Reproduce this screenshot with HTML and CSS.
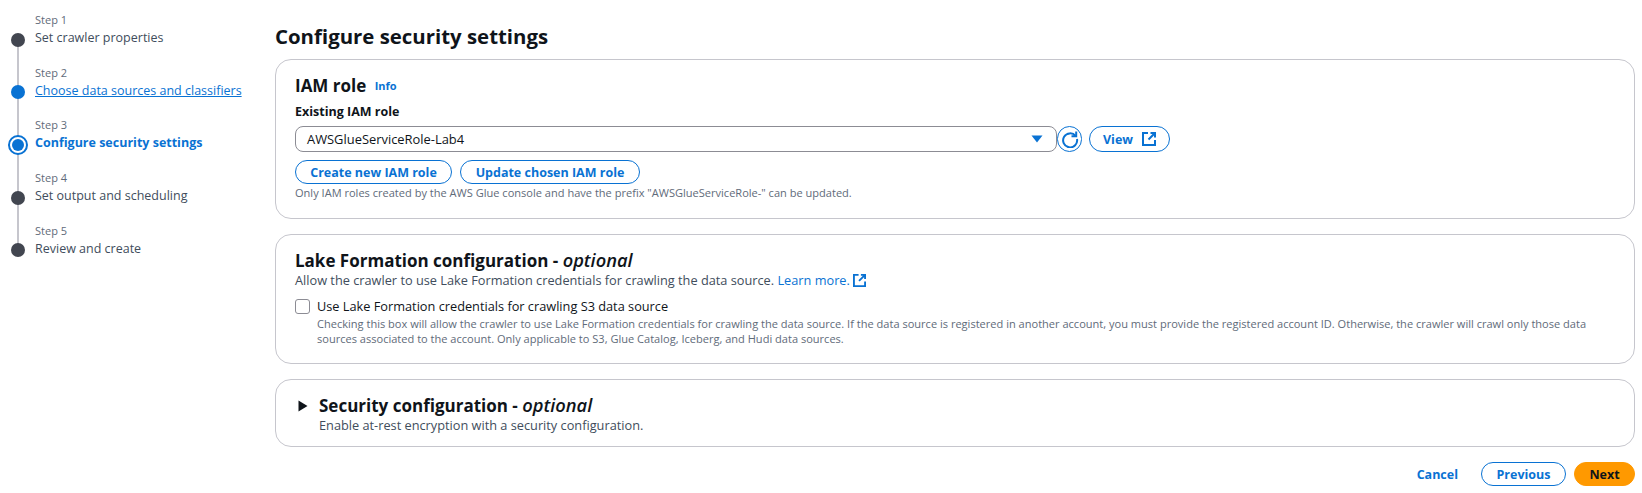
FILE: index.html
```html
<!DOCTYPE html>
<html lang="en">
<head>
    <meta charset="UTF-8">
    <title>Configure security settings</title>
    <link rel="stylesheet" href="styles.css">
</head>
<body>
    <nav class="wizard">
        <div class="step">
            <div class="step-num">Step 1</div>
            <div class="step-row"><span class="dot"></span><span class="step-name">Set crawler properties</span></div>
        </div>
        <div class="step">
            <div class="step-num">Step 2</div>
            <div class="step-row"><span class="dot dot-done"></span><a class="step-name step-link" href="#">Choose data sources and classifiers</a></div>
        </div>
        <div class="step">
            <div class="step-num">Step 3</div>
            <div class="step-row"><span class="dot dot-active"></span><span class="step-name step-current">Configure security settings</span></div>
        </div>
        <div class="step">
            <div class="step-num">Step 4</div>
            <div class="step-row"><span class="dot"></span><span class="step-name">Set output and scheduling</span></div>
        </div>
        <div class="step step-last">
            <div class="step-num">Step 5</div>
            <div class="step-row"><span class="dot"></span><span class="step-name">Review and create</span></div>
        </div>
    </nav>

    <main class="content">
        <h1>Configure security settings</h1>

        <section class="panel panel-iam">
            <h2>IAM role <a class="info" href="#">Info</a></h2>
            <div class="field-label">Existing IAM role</div>
            <div class="select-row">
                <div class="select">
                    <span>AWSGlueServiceRole-Lab4</span>
                    <svg class="caret" width="12" height="8" viewBox="0 0 12 8"><path d="M0.5 0.5h11L6 7.5z" fill="#0972d3"/></svg>
                </div>
                <button class="btn btn-icon" aria-label="Refresh">
                    <svg width="18" height="18" viewBox="0 0 18 18" fill="none" stroke="#0972d3" stroke-width="2"><path d="M14.6 6A7 7 0 1 0 16 9"/><path d="M15.2 1.5V6.2H10.5"/></svg>
                </button>
                <button class="btn btn-view">View
                    <svg width="14" height="14" viewBox="0 0 14 14" fill="none" stroke="#0972d3" stroke-width="2"><path d="M6 1H1V13H13V8"/><path d="M8.5 1H13V5.5M13 1L6.5 7.5"/></svg>
                </button>
            </div>
            <div class="btn-row">
                <button class="btn btn-create">Create new IAM role</button>
                <button class="btn btn-update">Update chosen IAM role</button>
            </div>
            <p class="hint">Only IAM roles created by the AWS Glue console and have the prefix "AWSGlueServiceRole-" can be updated.</p>
        </section>

        <section class="panel panel-lake">
            <h2>Lake Formation configuration - <em>optional</em></h2>
            <p class="desc">Allow the crawler to use Lake Formation credentials for crawling the data source. <a href="#">Learn more.</a>
                <svg class="ext" width="13" height="13" viewBox="0 0 14 14" fill="none" stroke="#0972d3" stroke-width="2"><path d="M6 1H1V13H13V8"/><path d="M8.5 1H13V5.5M13 1L6.5 7.5"/></svg>
            </p>
            <div class="check-row">
                <span class="checkbox"></span>
                <div>
                    <div class="check-label">Use Lake Formation credentials for crawling S3 data source</div>
                    <p class="check-hint">Checking this box will allow the crawler to use Lake Formation credentials for crawling the data source. If the data source is registered in another account, you must provide the registered account ID. Otherwise, the crawler will crawl only those data sources associated to the account. Only applicable to S3, Glue Catalog, Iceberg, and Hudi data sources.</p>
                </div>
            </div>
        </section>

        <section class="panel panel-security">
            <svg class="arrow" width="10" height="12" viewBox="0 0 10 12"><path d="M0.5 0.5L9.5 6L0.5 11.5z" fill="#0f141a"/></svg>
            <div>
                <h2>Security configuration - <em>optional</em></h2>
                <p class="desc">Enable at-rest encryption with a security configuration.</p>
            </div>
        </section>

        <footer class="actions">
            <a class="cancel" href="#">Cancel</a>
            <button class="btn btn-prev">Previous</button>
            <button class="btn btn-next">Next</button>
        </footer>
    </main>
</body>
</html>
```

FILE: styles.css
```css
* {
    box-sizing: border-box;
}
body {
    margin: 0;
    display: flex;
    font-family: "Open Sans", Arial, sans-serif;
    font-size: 12.5px;
    color: #414d5c;
    background-color: white;
}
.wizard {
    width: 275px;
    flex-shrink: 0;
    padding-top: 13px;
}
.step {
    position: relative;
    height: 52.7px;
}
.step::before {
    content: "";
    position: absolute;
    left: 17px;
    top: 32px;
    height: 48px;
    width: 2px;
    background-color: #c6c6cd;
}
.step-last::before {
    display: none;
}
.step-num {
    margin-left: 35px;
    font-size: 11px;
    line-height: 14px;
    color: #5f6b7a;
}
.step-row {
    display: flex;
    align-items: center;
    height: 19px;
    margin-top: 1px;
}
.dot {
    width: 14px;
    height: 14px;
    margin: 4px 6px 0 11px;
    border-radius: 50%;
    background-color: #424650;
    flex-shrink: 0;
    position: relative;
    z-index: 1;
}
.dot-done {
    background-color: #0972d3;
}
.dot-active {
    width: 20px;
    height: 20px;
    margin: 4px 3px 0 8px;
    background-color: white;
    border: 2px solid #0972d3;
}
.dot-active::after {
    content: "";
    position: absolute;
    left: 2px;
    top: 2px;
    width: 12px;
    height: 12px;
    border-radius: 50%;
    background-color: #0972d3;
}
.step-name {
    white-space: nowrap;
    margin-left: 4px;
}
.step-link {
    color: #0972d3;
}
.step-current {
    color: #0972d3;
    font-weight: 700;
}
.content {
    flex: 1;
    padding-right: 7px;
}
h1 {
    margin: 0;
    padding-top: 22px;
    font-size: 20.4px;
    line-height: 28px;
    font-weight: 700;
    color: #0f141a;
}
h2 {
    margin: 0;
    font-size: 17px;
    line-height: 22px;
    font-weight: 700;
    color: #0f141a;
}
h2 em {
    font-weight: 600;
    font-size: 18.3px;
}
.panel {
    margin-top: 9px;
    border: 1px solid #c6c6cd;
    border-radius: 16px;
    padding: 0 19px;
}
.panel-iam {
    height: 160px;
    padding-top: 15px;
}
.panel-lake {
    height: 130px;
    margin-top: 15px;
    padding-top: 14px;
}
.panel-security {
    height: 68px;
    margin-top: 15px;
    padding-top: 14px;
    display: flex;
    gap: 11px;
}
.arrow {
    margin: 6px 0 0 3px;
}
.info {
    margin-left: 4px;
    font-size: 11px;
    vertical-align: 2px;
    color: #0972d3;
    text-decoration: none;
}
.field-label {
    margin-top: 6px;
    font-size: 12.5px;
    line-height: 18px;
    font-weight: 700;
    color: #0f141a;
}
.select-row {
    display: flex;
    align-items: center;
    margin-top: 5px;
}
.select {
    width: 762px;
    height: 26px;
    display: flex;
    align-items: center;
    justify-content: space-between;
    padding: 0 13px 0 11px;
    border: 1px solid #8c8c94;
    border-radius: 8px;
    color: #0f141a;
    font-size: 12.9px;
}
.btn {
    font-family: inherit;
    font-size: 12.5px;
    font-weight: 700;
    color: #0972d3;
    background-color: white;
    border: 1px solid #0972d3;
    border-radius: 20px;
    padding: 0;
    height: 24px;
}
.btn-icon {
    width: 25px;
    height: 26px;
    display: flex;
    align-items: center;
    justify-content: center;
}
.btn-view {
    width: 81px;
    height: 26px;
    margin-left: 7px;
    display: flex;
    align-items: center;
    justify-content: center;
    gap: 9px;
}
.btn-row {
    display: flex;
    gap: 8px;
    margin-top: 8px;
}
.btn-create {
    width: 157px;
}
.btn-update {
    width: 180px;
}
.hint {
    margin: 0;
    font-size: 11.05px;
    line-height: 16px;
    color: #5f6b7a;
    padding-top: 1px;
}
.desc {
    margin: 0;
    font-size: 12.75px;
    line-height: 17px;
    color: #414d5c;
}
.desc a {
    color: #0972d3;
    text-decoration: none;
}
.ext {
    vertical-align: -2px;
}
.check-row {
    display: flex;
    gap: 7px;
    margin-top: 9px;
}
.checkbox {
    width: 15px;
    height: 15px;
    margin-top: 1px;
    border: 1.5px solid #8c8c94;
    border-radius: 3px;
    flex-shrink: 0;
}
.check-label {
    font-size: 12.75px;
    line-height: 17px;
    color: #0f141a;
}
.check-hint {
    margin: 1px 0 0;
    font-size: 11.05px;
    line-height: 15px;
    color: #5f6b7a;
}
.actions {
    display: flex;
    align-items: center;
    justify-content: flex-end;
    margin-top: 15px;
}
.cancel {
    margin-right: 23px;
    font-weight: 700;
    font-size: 12.5px;
    color: #0972d3;
    text-decoration: none;
}
.btn-prev {
    width: 85px;
}
.btn-next {
    width: 61px;
    margin-left: 8px;
    color: #0f141a;
    background-color: #ff9900;
    border-color: #ff9900;
}
```
